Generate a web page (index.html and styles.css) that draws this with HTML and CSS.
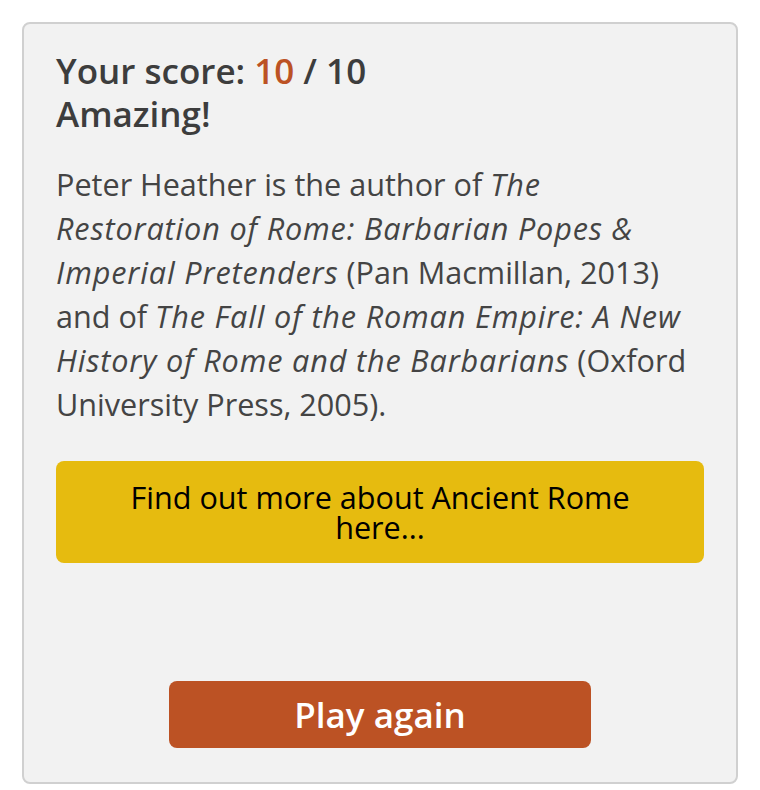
FILE: index.html
```html
<!DOCTYPE html>
<html lang="en">
<head>
    <meta charset="UTF-8">
    <meta name="viewport" content="width=device-width, initial-scale=1.0">
    <title>Quiz result</title>
    <link rel="stylesheet" href="styles.css">
</head>
<body>
    <div class="result-card">
        <h2 class="score">
            Your score: <span class="score-value">10</span> / 10<br>
            Amazing!
        </h2>
        <p class="about">
            Peter Heather is the author of <em>The Restoration of Rome: Barbarian Popes &amp; Imperial Pretenders</em> (Pan Macmillan, 2013) and of <em>The Fall of the Roman Empire: A New History of Rome and the Barbarians</em> (Oxford University Press, 2005).
        </p>
        <a class="more-button" href="#">Find out more about Ancient Rome here...</a>
        <div class="play-row">
            <button class="play-button">Play again</button>
        </div>
    </div>
</body>
</html>
```

FILE: styles.css
```css
body {
    margin: 22px;
    font-family: 'Open Sans', Arial, sans-serif;
    background-color: #fff;
    color: #444;
}
.result-card {
    background-color: #f2f2f2;
    border: 2px solid #d0d0d0;
    border-radius: 8px;
    padding: 25px 32px 34px 32px;
}
.score {
    margin: 0;
    font-size: 35px;
    font-weight: 600;
    line-height: 43px;
    color: #3d3d3d;
}
.score-value {
    color: #bc5224; /* Rust orange */
}
.about {
    margin: 27px 0 35px 0;
    padding-right: 10px;
    font-size: 30.6px;
    line-height: 44px;
    color: #444;
}
.about em {
    letter-spacing: 0.85px;
}
.more-button {
    display: block;
    padding: 21px 40px;
    background-color: #e6bb0f; /* Mustard yellow */
    border-radius: 8px;
    font-size: 30.6px;
    line-height: 30px;
    text-align: center;
    text-decoration: none;
    color: #000;
}
.play-row {
    display: flex;
    justify-content: center;
    margin-top: 118px;
}
.play-button {
    width: 422px;
    padding: 9px 0;
    border: none;
    border-radius: 8px;
    background-color: #bc5224;
    font-family: 'Open Sans', Arial, sans-serif;
    font-size: 35px;
    font-weight: 600;
    line-height: 49px;
    color: #fff;
    cursor: pointer;
}
```
